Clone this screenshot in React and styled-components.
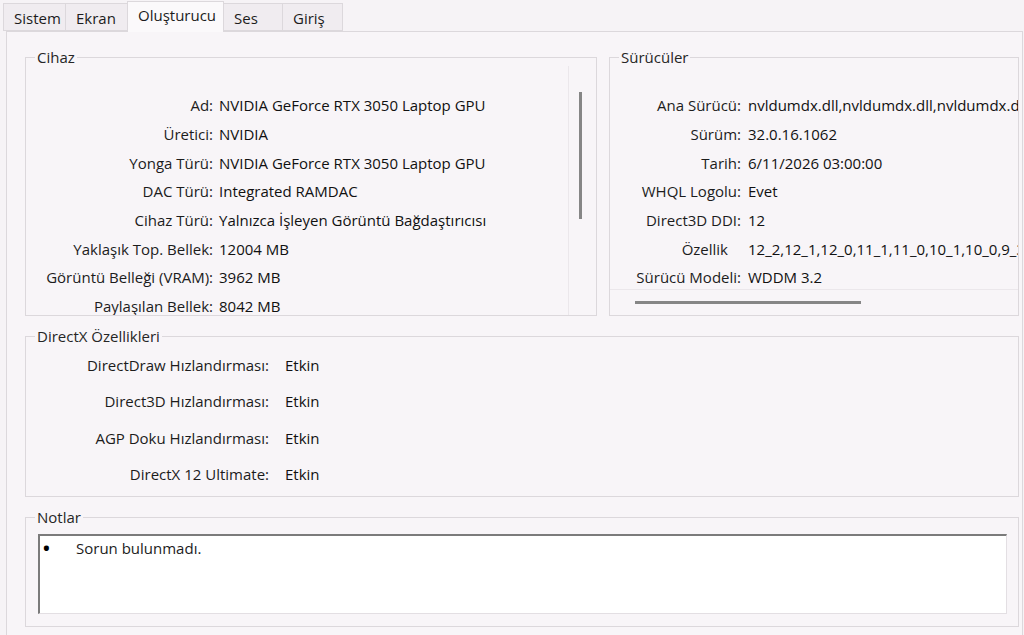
import React from 'react'
import styled, { createGlobalStyle } from 'styled-components'

const GlobalStyle = createGlobalStyle`
    html, body {
        margin: 0;
        padding: 0;
        background: #f6f3f6;
    }
    body {
        font-family: "Open Sans", "Liberation Sans", sans-serif;
        color: #1c1c1c;
    }
`

const Window = styled.div`
    width: 1024px;
    height: 635px;
    overflow: hidden;
    background: #f6f3f6;
    font-size: 15px;
`

const TabBar = styled.div`
    display: flex;
    align-items: flex-end;
    height: 31px;
    padding-left: 4px;
    box-sizing: border-box;
    position: relative;
    z-index: 1;
`

const Tab = styled.div`
    width: ${props => props.w}px;
    height: ${props => props.active ? 31 : 28}px;
    margin-left: -1px;
    margin-bottom: ${props => props.active ? -1 : 0}px;
    box-sizing: border-box;
    padding: ${props => props.active ? 3 : 4}px 0 0 10px;
    border: 1px solid #dcd8dc;
    border-bottom: ${props => props.active ? 'none' : '1px solid #dcd8dc'};
    background: ${props => props.active ? '#fbf9fb' : '#f0ecf0'};
    line-height: 20px;
    white-space: nowrap;
`

const Panel = styled.div`
    margin-left: 6px;
    width: 1017px;
    height: 604px;
    box-sizing: border-box;
    padding: 16px 3px 0 18px;
    border: 1px solid #dcd8dc;
    border-bottom: none;
    background: #f8f5f8;
    display: flex;
    flex-direction: column;
    gap: 11px;
`

const TopRow = styled.div`
    display: grid;
    grid-template-columns: 572px 1fr;
    column-gap: 12px;
`

const Group = styled.fieldset`
    margin: 0;
    padding: 0;
    min-width: 0;
    height: ${props => props.h}px;
    box-sizing: border-box;
    border: 1px solid #dcd8dc;
    display: flex;
    flex-direction: ${props => props.row ? 'row' : 'column'};
    overflow: hidden;
`

const Caption = styled.legend`
    margin-left: 9px;
    padding: 0 2px;
    line-height: 18px;
    color: #262626;
`

const InfoGrid = styled.div`
    display: grid;
    grid-template-columns: ${props => props.labelW}px max-content;
    column-gap: ${props => props.gap}px;
    grid-auto-rows: ${props => props.rowH}px;
    align-items: center;
    padding-top: ${props => props.top}px;
    white-space: nowrap;
`

const Label = styled.span`
    text-align: right;
    padding-right: ${props => props.pad || 0}px;
`

const Value = styled.span`
    color: #111;
`

const Viewport = styled.div`
    flex: ${props => props.fixed ? 'none' : 1};
    height: ${props => props.fixed ? `${props.fixed}px` : 'auto'};
    min-width: 0;
    overflow: hidden;
`

const VTrack = styled.div`
    width: 27px;
    border-left: 1px solid #ebe7eb;
`

const VThumb = styled.div`
    width: 3px;
    height: 127px;
    margin: 26px 0 0 10px;
    background: #868686;
`

const HTrack = styled.div`
    flex: 1;
    border-top: 1px solid #ebe7eb;
`

const HThumb = styled.div`
    width: 226px;
    height: 3px;
    margin: 11px 0 0 25px;
    background: #868686;
`

const NoteBox = styled.div`
    height: 80px;
    margin: 8px 11px 0 12px;
    box-sizing: border-box;
    background: #fff;
    border-top: 2px solid #7b7b7b;
    border-left: 2px solid #7b7b7b;
    border-right: 1px solid #e3dfe3;
    border-bottom: 1px solid #e3dfe3;
    padding: 2px 0 0 3px;
`

const NoteLine = styled.div`
    display: flex;
    line-height: 20px;
`

const Bullet = styled.span`
    width: 33px;
    font-size: 18px;
    font-weight: bold;
    color: #000;
`

const tabs = [
    ['Sistem', 63],
    ['Ekran', 63],
    ['Oluşturucu', 97],
    ['Ses', 60],
    ['Giriş', 61],
]

const device = [
    ['Ad:', 'NVIDIA GeForce RTX 3050 Laptop GPU'],
    ['Üretici:', 'NVIDIA'],
    ['Yonga Türü:', 'NVIDIA GeForce RTX 3050 Laptop GPU'],
    ['DAC Türü:', 'Integrated RAMDAC'],
    ['Cihaz Türü:', 'Yalnızca İşleyen Görüntü Bağdaştırıcısı'],
    ['Yaklaşık Top. Bellek:', '12004 MB'],
    ['Görüntü Belleği (VRAM):', '3962 MB'],
    ['Paylaşılan Bellek:', '8042 MB'],
]

// long values run past the box and are cut by the viewport, as in the dialog
const drivers = [
    ['Ana Sürücü:', 'nvldumdx.dll,nvldumdx.dll,nvldumdx.dll'],
    ['Sürüm:', '32.0.16.1062'],
    ['Tarih:', '6/11/2026 03:00:00'],
    ['WHQL Logolu:', 'Evet'],
    ['Direct3D DDI:', '12'],
    ['Özellik', '12_2,12_1,12_0,11_1,11_0,10_1,10_0,9_3', 13],
    ['Sürücü Modeli:', 'WDDM 3.2'],
]

const features = [
    ['DirectDraw Hızlandırması:', 'Etkin'],
    ['Direct3D Hızlandırması:', 'Etkin'],
    ['AGP Doku Hızlandırması:', 'Etkin'],
    ['DirectX 12 Ultimate:', 'Etkin'],
]

const renderRows = rows => rows.map(([label, value, pad]) => (
    <React.Fragment key={label}>
        <Label pad={pad}>{label}</Label>
        <Value>{value}</Value>
    </React.Fragment>
))

const App = () => (
    <Window>
        <GlobalStyle />
        <TabBar>
            {tabs.map(([name, w]) => (
                <Tab key={name} w={w} active={name === 'Oluşturucu'}>{name}</Tab>
            ))}
        </TabBar>
        <Panel>
            <TopRow>
                <Group h={268} row>
                    <Caption>Cihaz</Caption>
                    <Viewport>
                        <InfoGrid labelW={187} gap={6} rowH={28.7} top={25}>
                            {renderRows(device)}
                        </InfoGrid>
                    </Viewport>
                    <VTrack><VThumb /></VTrack>
                </Group>
                <Group h={268}>
                    <Caption>Sürücüler</Caption>
                    <Viewport fixed={223}>
                        <InfoGrid labelW={131} gap={7} rowH={28.7} top={25}>
                            {renderRows(drivers)}
                        </InfoGrid>
                    </Viewport>
                    <HTrack><HThumb /></HTrack>
                </Group>
            </TopRow>
            <Group h={170}>
                <Caption>DirectX Özellikleri</Caption>
                <InfoGrid labelW={243} gap={16} rowH={36.3} top={2}>
                    {renderRows(features)}
                </InfoGrid>
            </Group>
            <Group h={119}>
                <Caption>Notlar</Caption>
                <NoteBox>
                    <NoteLine>
                        <Bullet>•</Bullet>
                        <span>Sorun bulunmadı.</span>
                    </NoteLine>
                </NoteBox>
            </Group>
        </Panel>
    </Window>
)

export default App
